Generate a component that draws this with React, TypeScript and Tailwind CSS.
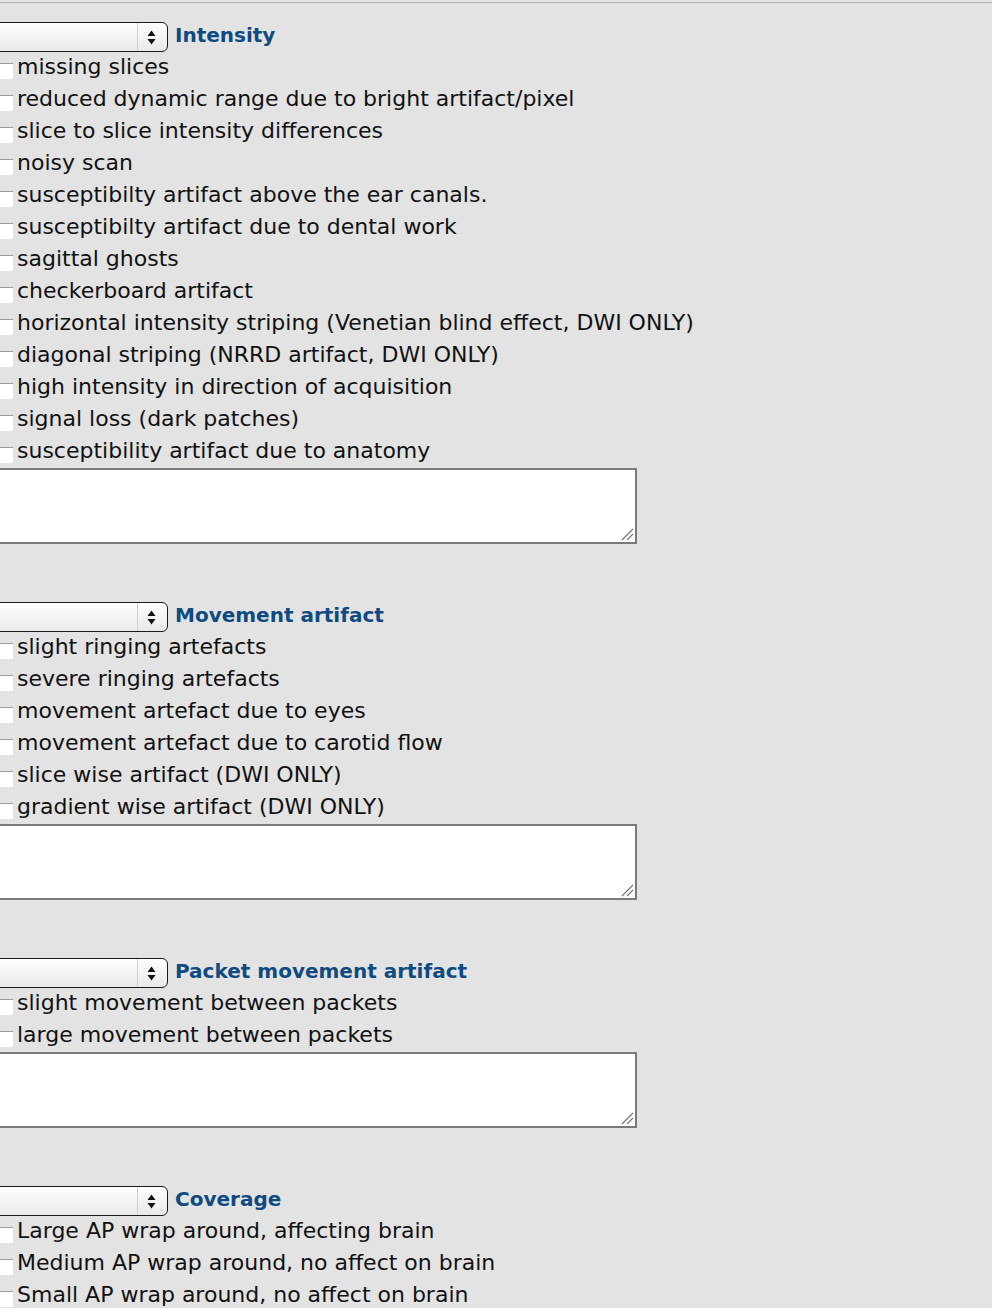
import React from 'react';

type Section = { title: string; items: string[] };

const sections: Section[] = [
  {
    title: 'Intensity',
    items: [
      'missing slices',
      'reduced dynamic range due to bright artifact/pixel',
      'slice to slice intensity differences',
      'noisy scan',
      'susceptibilty artifact above the ear canals.',
      'susceptibilty artifact due to dental work',
      'sagittal ghosts',
      'checkerboard artifact',
      'horizontal intensity striping (Venetian blind effect, DWI ONLY)',
      'diagonal striping (NRRD artifact, DWI ONLY)',
      'high intensity in direction of acquisition',
      'signal loss (dark patches)',
      'susceptibility artifact due to anatomy',
    ],
  },
  {
    title: 'Movement artifact',
    items: [
      'slight ringing artefacts',
      'severe ringing artefacts',
      'movement artefact due to eyes',
      'movement artefact due to carotid flow',
      'slice wise artifact (DWI ONLY)',
      'gradient wise artifact (DWI ONLY)',
    ],
  },
  {
    title: 'Packet movement artifact',
    items: ['slight movement between packets', 'large movement between packets'],
  },
  {
    title: 'Coverage',
    items: [
      'Large AP wrap around, affecting brain',
      'Medium AP wrap around, no affect on brain',
      'Small AP wrap around, no affect on brain',
    ],
  },
];

const SelectBox: React.FC = () => (
  <div className="relative -ml-[2px] h-[30px] w-[170px] shrink-0 rounded-r-[6px] border-[1.5px] border-[#1a1a1a] bg-gradient-to-b from-white to-[#e9e9e9]">
    <div className="absolute top-0 bottom-0 left-[138px] w-px bg-[#cfcfcf]" />
    <svg className="absolute left-[148px] top-[7px]" width="9" height="15" viewBox="0 0 9 15">
      <path d="M4.5 0.5 L8.5 6 L0.5 6 Z" fill="#111" />
      <path d="M0.5 9 L8.5 9 L4.5 14.5 Z" fill="#111" />
    </svg>
  </div>
);

const CheckRow: React.FC<{ label: string }> = ({ label }) => (
  <div className="flex h-[32px] items-center">
    <div className="relative h-[32px] w-[17px] shrink-0">
      <div className="absolute left-0 top-[12px] h-[16px] w-[13px] border-t border-[#9a9a9a] bg-white" />
    </div>
    <span className="whitespace-nowrap text-[22px] leading-none text-[#111]">{label}</span>
  </div>
);

export default function App() {
  return (
    <div
      className="min-h-[1308px] w-[992px] overflow-hidden bg-[#e3e3e3] pt-[2px]"
      style={{ fontFamily: '"DejaVu Sans", Verdana, sans-serif' }}
    >
      <div className="h-[2px] border-t border-[#b8b8b8] bg-[#d9d9d9]" />
      <div className="flex flex-col pt-[18px]">
        {sections.map((s) => (
          <div key={s.title} className="mb-[58px] flex flex-col">
            <div className="flex items-center">
              <SelectBox />
              <span className="ml-[7px] pb-[5px] text-[20px] font-bold leading-none text-[#0f4a80]">{s.title}</span>
            </div>
            <div className="-mt-[1px] flex flex-col">
              {s.items.map((it) => (
                <CheckRow key={it} label={it} />
              ))}
            </div>
            <div className="relative -ml-[2px] mt-[1px] h-[76px] w-[639px] border-2 border-[#7a7a7a] bg-white">
              <svg className="absolute bottom-[1px] right-[1px]" width="14" height="14" viewBox="0 0 14 14">
                <path d="M2 13 L13 2 M7 13 L13 7" stroke="#777" strokeWidth="1.2" />
              </svg>
            </div>
          </div>
        ))}
      </div>
    </div>
  );
}
